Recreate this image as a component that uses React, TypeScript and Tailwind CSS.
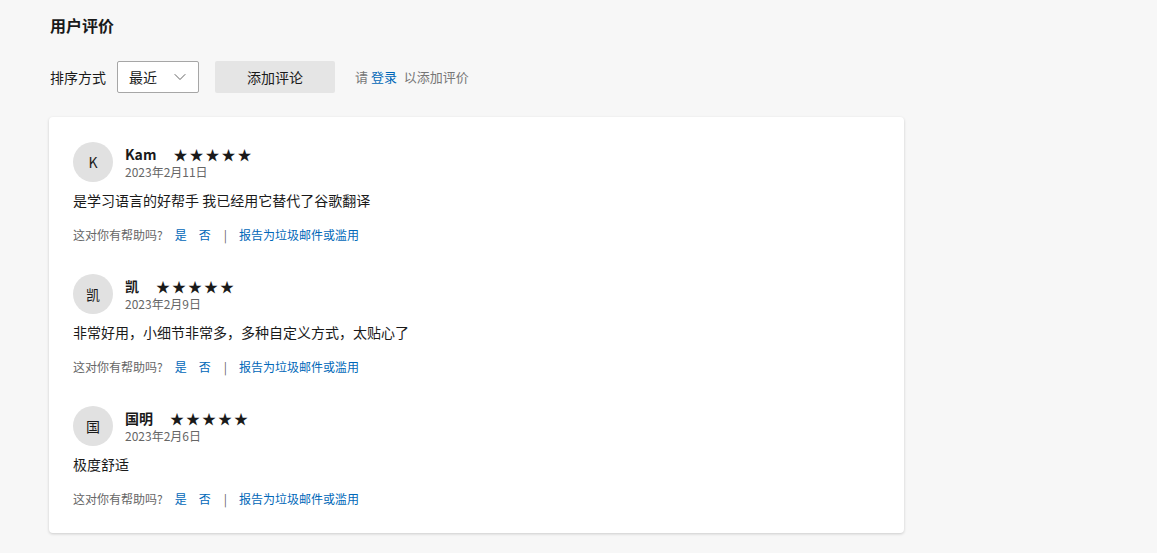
import { ChevronDown } from "lucide-react";

const reviews = [
  { initial: "K", name: "Kam", date: "2023年2月11日", text: "是学习语言的好帮手 我已经用它替代了谷歌翻译" },
  { initial: "凯", name: "凯", date: "2023年2月9日", text: "非常好用，小细节非常多，多种自定义方式，太贴心了" },
  { initial: "国", name: "国明", date: "2023年2月6日", text: "极度舒适" },
];

function Stars() {
  return (
    <div className="flex gap-[3px] text-[14px] leading-5 text-[#1a1a1a]">
      {[0, 1, 2, 3, 4].map((i) => (
        <span key={i} className="w-[13px] text-center">★</span>
      ))}
    </div>
  );
}

function Review({ initial, name, date, text }: (typeof reviews)[number]) {
  return (
    <div>
      <div className="flex items-start gap-3">
        <div className="w-10 h-10 rounded-full bg-[#e1e1e1] flex items-center justify-center text-[14px] text-[#1a1a1a]">
          {initial}
        </div>
        <div className="pt-0.5">
          <div className="flex items-center gap-[17px] h-5">
            <span className="text-[14px] font-semibold leading-5 text-[#1a1a1a]">{name}</span>
            <Stars />
          </div>
          <div className="text-[12px] leading-4 text-[#666]">{date}</div>
        </div>
      </div>
      <p className="mt-2 text-[14px] leading-5 text-[#1a1a1a]">{text}</p>
      <div className="mt-4 flex items-center text-[12px] leading-[18px]">
        <span className="text-[#666]">这对你有帮助吗?</span>
        <span className="ml-3 text-[#0067b8]">是</span>
        <span className="ml-3 text-[#0067b8]">否</span>
        <span className="ml-[13px] text-[#666]">|</span>
        <span className="ml-3 text-[#0067b8]">报告为垃圾邮件或滥用</span>
      </div>
    </div>
  );
}

export default function App() {
  return (
    <div
      className="min-h-[553px] bg-[#f7f7f7] px-[49px] pt-[14px]"
      style={{ fontFamily: '"Segoe UI", "Noto Sans CJK SC", "Noto Sans", sans-serif' }}
    >
      <h2 className="pl-px text-[16px] font-bold leading-[22px] text-[#1a1a1a]">用户评价</h2>

      <div className="mt-[25px] flex items-center pl-px">
        <span className="text-[14px] text-[#1a1a1a]">排序方式</span>
        <div className="ml-[11px] w-[82px] h-8 border border-[#a6a6a6] rounded-[2px] bg-white flex items-center justify-between pl-[11px] pr-[8px] text-[14px] text-[#1a1a1a]">
          <span>最近</span>
          <ChevronDown size={20} strokeWidth={1} className="text-[#444]" />
        </div>
        <button className="ml-4 w-[120px] h-8 rounded-[2px] bg-[#e5e5e5] text-[14px] text-[#1a1a1a]">
          添加评论
        </button>
        <span className="ml-5 text-[13px] text-[#767676]">
          请 <span className="text-[#0067b8]">登录</span> <span className="ml-1">以添加评价</span>
        </span>
      </div>

      <div className="mt-[24px] w-[855px] bg-white rounded-[4px] shadow-[0_1px_3px_rgba(0,0,0,0.18)] px-6 pt-[25px] pb-[25px] flex flex-col gap-[30px]">
        {reviews.map((r) => (
          <Review key={r.date} {...r} />
        ))}
      </div>
    </div>
  );
}
